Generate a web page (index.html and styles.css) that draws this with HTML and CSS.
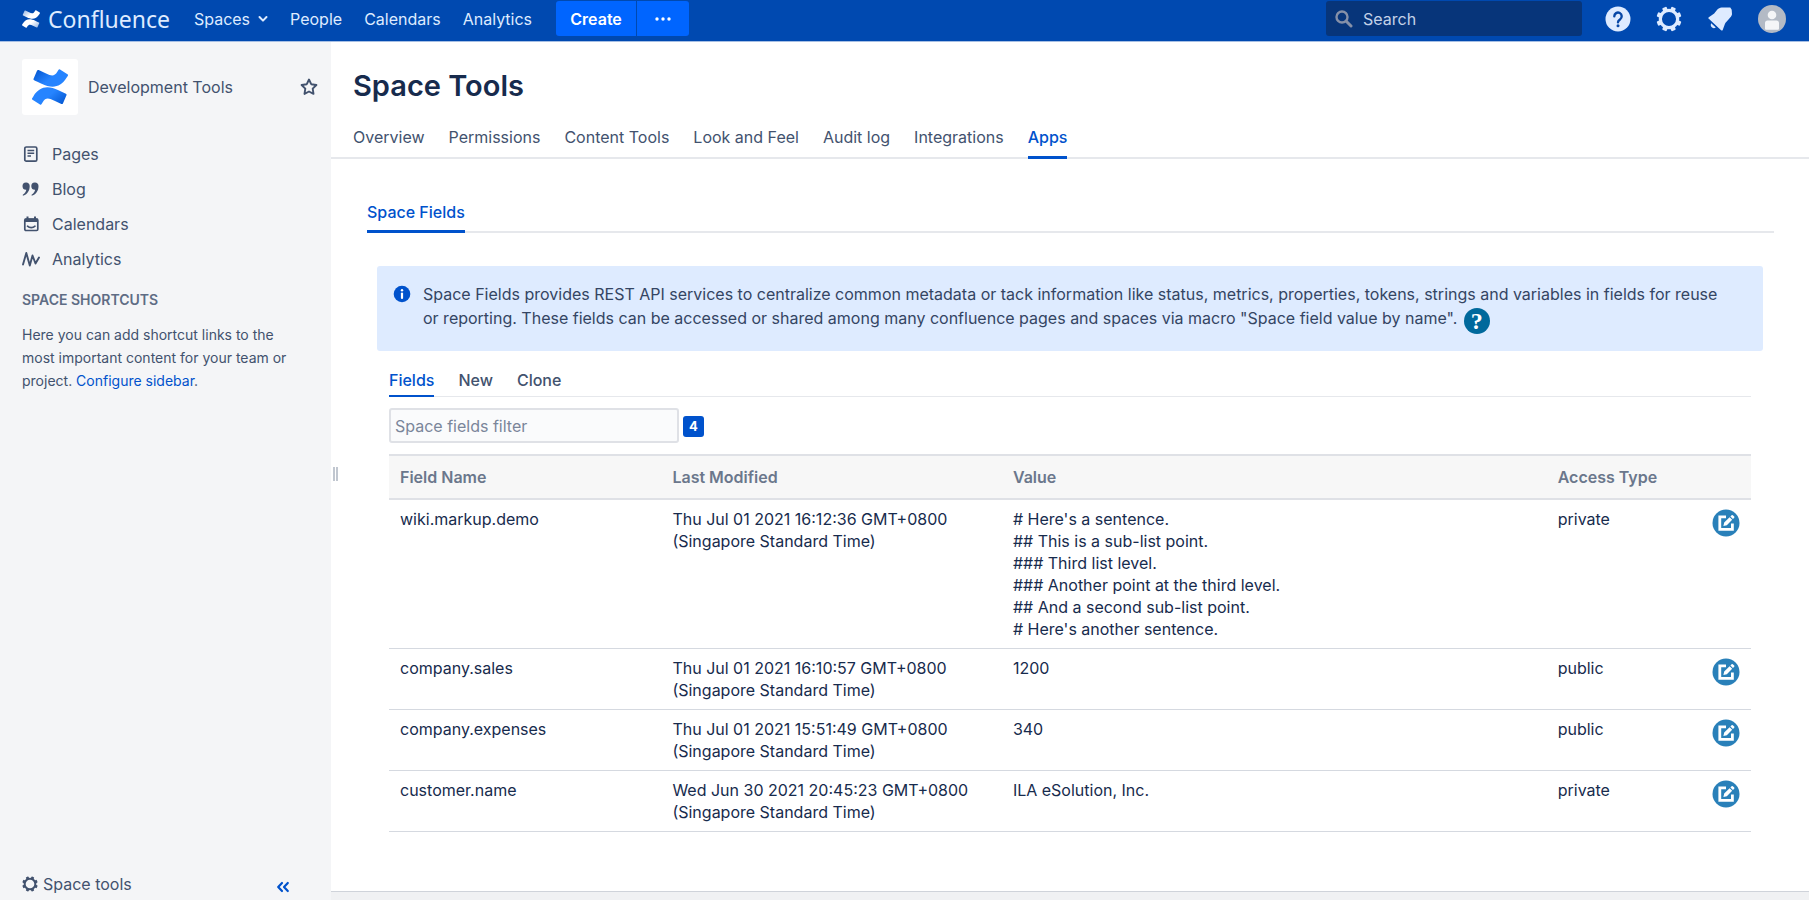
FILE: index.html
```html
<!DOCTYPE html>
<html lang="en">
<head>
  <meta charset="utf-8">
  <title>Space Tools - Development Tools - Confluence</title>
  <link rel="stylesheet" href="styles.css">
</head>

<body>

<!-- shared icon shapes -->
<svg class="sprite" width="0" height="0" aria-hidden="true">
  <defs>
    <linearGradient id="blue-top" x1="0" y1="0" x2="1" y2="0.6">
      <stop offset="0" stop-color="#0052cc"/>
      <stop offset="0.6" stop-color="#2684ff"/>
    </linearGradient>
    <linearGradient id="blue-bottom" x1="1" y1="1" x2="0" y2="0.4">
      <stop offset="0" stop-color="#0052cc"/>
      <stop offset="0.6" stop-color="#2684ff"/>
    </linearGradient>
    <linearGradient id="white-top" x1="0" y1="0" x2="1" y2="0.6">
      <stop offset="0" stop-color="#8fb0e0"/>
      <stop offset="0.6" stop-color="#ffffff"/>
    </linearGradient>
    <linearGradient id="white-bottom" x1="1" y1="1" x2="0" y2="0.4">
      <stop offset="0" stop-color="#8fb0e0"/>
      <stop offset="0.6" stop-color="#ffffff"/>
    </linearGradient>
    <path id="mark-bottom" d="M.87 18.257c-.248.382-.53.875-.763 1.245a.764.764 0 0 0 .255 1.04l4.965 3.054a.764.764 0 0 0 1.058-.26c.199-.332.454-.763.733-1.221 1.967-3.247 3.945-2.853 7.508-1.146l4.957 2.337a.764.764 0 0 0 1.028-.382l2.364-5.346a.764.764 0 0 0-.382-1 599.851 599.851 0 0 1-4.965-2.361C10.911 10.97 5.224 11.185.87 18.257z"/>
    <path id="mark-top" d="M23.131 5.743c.249-.405.531-.875.764-1.25a.764.764 0 0 0-.256-1.034L18.675.404a.764.764 0 0 0-1.058.26c-.195.335-.451.763-.734 1.225-1.966 3.246-3.945 2.85-7.508 1.146L4.437.694a.764.764 0 0 0-1.027.382L1.046 6.422a.764.764 0 0 0 .382 1c1.039.49 3.105 1.467 4.965 2.361 6.698 3.246 12.392 3.029 16.738-4.04z"/>
    <symbol id="gear" viewBox="0 0 24 24">
      <circle cx="12" cy="12" r="8" fill="none" stroke="currentColor" stroke-width="3"/>
      <g fill="currentColor">
        <rect id="tooth" x="9.8" y="0.4" width="4.4" height="4" rx="1" transform="rotate(22.5 12 12)"/>
        <use href="#tooth" transform="rotate(45 12 12)"/>
        <use href="#tooth" transform="rotate(90 12 12)"/>
        <use href="#tooth" transform="rotate(135 12 12)"/>
        <use href="#tooth" transform="rotate(180 12 12)"/>
        <use href="#tooth" transform="rotate(225 12 12)"/>
        <use href="#tooth" transform="rotate(270 12 12)"/>
        <use href="#tooth" transform="rotate(315 12 12)"/>
      </g>
    </symbol>
    <symbol id="edit" viewBox="0 0 28 28">
      <circle cx="14" cy="14" r="13.5" fill="#2980b9"/>
      <path d="M14 7.8H7.8v12.6h12.600v-5.800" fill="none" stroke="#fff" stroke-width="2.8"/>
      <path d="M11.400 17l.8-3.400 5.400-5.400 2.600 2.600-5.400 5.400zM18.400 7.400l1.200-1.200a.9.9 0 0 1 1.200 0l1.400 1.400a.9.9 0 0 1 0 1.200L21 10z" fill="#fff"/>
    </symbol>
  </defs>
</svg>

<header class="header">
  <a class="brand" href="#">
    <svg width="18" height="18" viewBox="0 0 24 24" aria-hidden="true">
      <use href="#mark-top" fill="url(#white-top)"/>
      <use href="#mark-bottom" fill="url(#white-bottom)"/>
    </svg>
    <span>Confluence</span>
  </a>
  <nav class="header-nav">
    <a href="#">Spaces
      <svg width="10" height="8" viewBox="0 0 10 8" aria-hidden="true"><path d="M1.5 2L5 5.600 8.500 2" fill="none" stroke="currentColor" stroke-width="2" stroke-linecap="round" stroke-linejoin="round"/></svg>
    </a>
    <a href="#">People</a>
    <a href="#">Calendars</a>
    <a href="#">Analytics</a>
  </nav>
  <div class="create">
    <button type="button">Create</button>
    <button type="button" class="more" aria-label="Create from template">
      <svg width="16" height="4" viewBox="0 0 16 4" aria-hidden="true"><g fill="#fff"><circle cx="2" cy="2" r="1.700"/><circle cx="8" cy="2" r="1.700"/><circle cx="14" cy="2" r="1.700"/></g></svg>
    </button>
  </div>
  <form class="search">
    <svg width="18" height="18" viewBox="0 0 18 18" aria-hidden="true"><circle cx="7" cy="7" r="5.500" fill="none" stroke="#8590a8" stroke-width="2.400"/><path d="M11.500 11.500l4.500 4.500" stroke="#8590a8" stroke-width="3" stroke-linecap="round"/></svg>
    <input type="search" placeholder="Search" aria-label="Search">
  </form>
  <div class="header-icons">
    <a href="#" aria-label="Help">
      <svg width="26" height="26" viewBox="0 0 26 26"><circle cx="13" cy="13" r="12.500" fill="#deebff"/><path d="M9.300 10.300a3.700 3.700 0 1 1 5.700 3.100c-1.300.8-2 1.400-2 2.800" fill="none" stroke="#0747a6" stroke-width="2.400" stroke-linecap="round"/><circle cx="13" cy="19.800" r="1.500" fill="#0747a6"/></svg>
    </a>
    <a href="#" aria-label="Administration">
      <svg width="26" height="26"><use href="#gear"/></svg>
    </a>
    <a href="#" aria-label="Notifications">
      <svg width="26" height="26" viewBox="0 0 26 26"><path d="M23.300 1.500L14.600 1.600C11 2 9.500 4.800 7.200 7.600L1.800 11.200c-.7.500-.6 1 0 1.500l12.300 11.500c.7.600 1.300.5 1.600-.2l2.300-6.200c1.800-3.200 6.400-6.200 7-9.500l-.3-4.500z" fill="#deebff"/><path d="M4.200 17.300l4.600 4.200c-1.600 1.200-3.400.8-4.300-.4-.9-1.200-.9-2.600-.3-3.800z" fill="#deebff"/></svg>
    </a>
    <a href="#" aria-label="Your profile">
      <svg width="28" height="28" viewBox="0 0 28 28"><circle cx="14" cy="14" r="14" fill="#b3bac5"/><circle cx="14" cy="10" r="4.300" fill="#f4f5f7"/><path d="M7 18c0-1.600 1-2.500 2.500-2.500h9c1.500 0 2.500.9 2.500 2.500v5.500c0 .8-.6 1.300-1.400 1.300H8.400c-.8 0-1.400-.5-1.400-1.300z" fill="#f4f5f7"/></svg>
    </a>
  </div>
</header>

<div class="page">

  <aside class="sidebar">
    <div class="space-header">
      <a class="space-logo" href="#" aria-label="Development Tools home">
        <svg width="36" height="36" viewBox="0 0 24 24" aria-hidden="true">
          <use href="#mark-top" fill="url(#blue-top)"/>
          <use href="#mark-bottom" fill="url(#blue-bottom)"/>
        </svg>
      </a>
      <a class="space-name" href="#">Development Tools</a>
      <button type="button" class="star" aria-label="Add to My Spaces">
        <svg width="18" height="18" viewBox="0 0 18 18" aria-hidden="true"><path d="M9 1.500l2.200 4.700 5.200.8-3.700 3.700.8 5.200L9 13.500l-4.500 2.400.8-5.200L1.600 7l5.200-.8z" fill="none" stroke="currentColor" stroke-width="1.900" stroke-linejoin="round"/></svg>
      </button>
    </div>

    <ul class="space-links">
      <li><a href="#">
        <svg width="18" height="18" viewBox="0 0 18 18" aria-hidden="true"><rect x="2.800" y="2" width="12" height="14.200" rx="1.500" fill="none" stroke="currentColor" stroke-width="1.700"/><path d="M5.500 5.500h6.700M5.500 8.300h6.700M5.500 11h3.500" stroke="currentColor" stroke-width="1.500"/></svg>
        Pages</a></li>
      <li><a href="#">
        <svg width="18" height="18" viewBox="0 0 18 18" aria-hidden="true"><path id="quote" d="M4 2.500a3.500 3.500 0 0 1 3.700 3.800c0 4.400-2.400 8-6.200 9.300-.8.200-1.100-.8-.4-1.200 1.900-1.100 3-2.700 3.200-4.600A3.600 3.600 0 0 1 4 2.500z" fill="currentColor"/><use href="#quote" x="8.800"/></svg>
        Blog</a></li>
      <li><a href="#">
        <svg width="18" height="18" viewBox="0 0 18 18" aria-hidden="true"><rect x="2.800" y="4" width="13" height="11.500" rx="1.200" fill="none" stroke="currentColor" stroke-width="1.700"/><path d="M2.800 3.500h13v3.500h-13zM4.500 1.500h2v3h-2zM12 1.500h2v3h-2z" fill="currentColor"/><path d="M5.500 11.200c2 1.900 5.500 1.900 7.500 0" fill="none" stroke="currentColor" stroke-width="1.600" stroke-linecap="round"/></svg>
        Calendars</a></li>
      <li><a href="#">
        <svg width="18" height="18" viewBox="0 0 18 18" aria-hidden="true"><path d="M1 14.500L4.300 3 7.800 15.500 10.500 5.500l3 8L17 7.500" fill="none" stroke="currentColor" stroke-width="1.900" stroke-linecap="round" stroke-linejoin="round"/></svg>
        Analytics</a></li>
    </ul>

    <h2>Space shortcuts</h2>
    <p class="tip">Here you can add shortcut links to the most important content for your team or project. <a href="#">Configure sidebar</a>.</p>

    <div class="sidebar-footer">
      <a href="#"><svg width="16" height="16" aria-hidden="true"><use href="#gear"/></svg>Space tools</a>
      <button type="button" class="collapse" aria-label="Collapse sidebar">
        <svg width="14" height="12" viewBox="0 0 14 12" aria-hidden="true"><path d="M6 2L2.200 6 6 10M11.800 2L8 6l3.800 4" fill="none" stroke="currentColor" stroke-width="2.200" stroke-linecap="round" stroke-linejoin="round"/></svg>
      </button>
    </div>
    <div class="grip"></div>
  </aside>

  <main class="main">
    <h1>Space Tools</h1>

    <nav class="tabs">
      <a href="#">Overview</a>
      <a href="#">Permissions</a>
      <a href="#">Content Tools</a>
      <a href="#">Look and Feel</a>
      <a href="#">Audit log</a>
      <a href="#">Integrations</a>
      <a href="#" class="active">Apps</a>
    </nav>

    <div class="app">
      <nav class="tabs sub-tabs">
        <a href="#" class="active">Space Fields</a>
      </nav>

      <div class="info">
        <svg width="18" height="18" viewBox="0 0 18 18" aria-hidden="true"><circle cx="9" cy="9" r="8.300" fill="#0052cc"/><circle cx="9" cy="5.300" r="1.200" fill="#fff"/><path d="M9 8.500v4.500" stroke="#fff" stroke-width="2.200" stroke-linecap="round"/></svg>
        <p>Space Fields provides REST API services to centralize common metadata or tack information like status, metrics, properties, tokens, strings and variables in fields for reuse or reporting. These fields can be accessed or shared among many confluence pages and spaces via macro "Space field value by name". <a class="help" href="#" aria-label="Documentation">?</a></p>
      </div>

      <div class="fields">
        <nav class="tabs field-tabs">
          <a href="#" class="active">Fields</a>
          <a href="#">New</a>
          <a href="#">Clone</a>
        </nav>

        <form class="filter">
          <input type="text" placeholder="Space fields filter" aria-label="Space fields filter">
          <span class="badge">4</span>
        </form>

        <table>
          <thead>
            <tr>
              <th class="col-name">Field Name</th>
              <th class="col-modified">Last Modified</th>
              <th class="col-value">Value</th>
              <th class="col-access">Access Type</th>
              <th></th>
            </tr>
          </thead>
          <tbody>
            <tr>
              <td>wiki.markup.demo</td>
              <td>Thu Jul 01 2021 16:12:36 GMT+0800<br>(Singapore Standard Time)</td>
              <td># Here's a sentence.<br>
                ## This is a sub-list point.<br>
                ### Third list level.<br>
                ### Another point at the third level.<br>
                ## And a second sub-list point.<br>
                # Here's another sentence.</td>
              <td>private</td>
              <td class="action"><button type="button" aria-label="Edit wiki.markup.demo"><svg width="28" height="28"><use href="#edit"/></svg></button></td>
            </tr>
            <tr>
              <td>company.sales</td>
              <td>Thu Jul 01 2021 16:10:57 GMT+0800<br>(Singapore Standard Time)</td>
              <td>1200</td>
              <td>public</td>
              <td class="action"><button type="button" aria-label="Edit company.sales"><svg width="28" height="28"><use href="#edit"/></svg></button></td>
            </tr>
            <tr>
              <td>company.expenses</td>
              <td>Thu Jul 01 2021 15:51:49 GMT+0800<br>(Singapore Standard Time)</td>
              <td>340</td>
              <td>public</td>
              <td class="action"><button type="button" aria-label="Edit company.expenses"><svg width="28" height="28"><use href="#edit"/></svg></button></td>
            </tr>
            <tr>
              <td>customer.name</td>
              <td>Wed Jun 30 2021 20:45:23 GMT+0800<br>(Singapore Standard Time)</td>
              <td>ILA eSolution, Inc.</td>
              <td>private</td>
              <td class="action"><button type="button" aria-label="Edit customer.name"><svg width="28" height="28"><use href="#edit"/></svg></button></td>
            </tr>
          </tbody>
        </table>
      </div>
    </div>

    <div class="page-end"></div>
  </main>

</div>

</body>
</html>
```
FILE: styles.css
```css
* {
  box-sizing: border-box;
}
body {
  margin: 0;
  min-height: 100vh;
  display: flex;
  flex-direction: column;
  font-family: Inter, "Liberation Sans", sans-serif;
  font-size: 16px;
  line-height: 22px;
  color: #172b4d;
  background-color: #ffffff;
}
a {
  color: inherit;
  text-decoration: none;
}
svg {
  display: block;
  flex: none;
}
button {
  padding: 0;
  border: 0;
  background: none;
  font: inherit;
  color: inherit;
  cursor: pointer;
}
.sprite {
  position: absolute;
}

/* header */
.header {
  display: flex;
  align-items: center;
  height: 42px;
  padding: 0 23px 4px 22px;
  background-color: #0049b0;
  border-bottom: 1px solid #a6bfe4;
  color: #deebff;
}
.brand {
  display: flex;
  align-items: center;
  gap: 8px;
  margin-right: 24px;
  font-family: "Noto Sans", "Open Sans", sans-serif;
  font-size: 23px;
}
.header-nav {
  display: flex;
  gap: 22px;
}
.header-nav a {
  display: flex;
  align-items: center;
  gap: 8px;
}
.create {
  display: flex;
  gap: 1px;
  margin-left: 24px;
}
.create button {
  width: 80px;
  height: 35px;
  background-color: #0065ff;
  border-radius: 3px 0 0 3px;
  color: #ffffff;
  font-weight: 600;
}
.create .more {
  display: flex;
  align-items: center;
  justify-content: center;
  width: 52px;
  border-radius: 0 3px 3px 0;
}
.search {
  display: flex;
  align-items: center;
  gap: 10px;
  width: 256px;
  height: 35px;
  margin-left: auto;
  padding: 0 9px;
  background-color: #07357a;
  border-radius: 3px;
}
.search input {
  flex: 1;
  min-width: 0;
  padding: 0;
  border: 0;
  background: none;
  font: inherit;
  color: #deebff;
}
.search input::placeholder {
  color: #c3d1e8;
}
.header-icons {
  display: flex;
  align-items: center;
  gap: 25px;
  margin-left: 23px;
}

/* sidebar */
.page {
  flex: 1;
  display: flex;
}
.sidebar {
  position: relative;
  display: flex;
  flex-direction: column;
  width: 331px;
  flex: none;
  padding: 17px 13px 5px 22px;
  background-color: #f4f5f7;
  color: #42526e;
}
.space-header {
  display: flex;
  align-items: center;
  gap: 10px;
}
.space-logo {
  padding: 10px;
  background-color: #ffffff;
  border-radius: 3px;
}
.space-name {
  flex: 1;
}
.space-links {
  margin: 21px 0 0;
  padding: 0;
  list-style: none;
}
.space-links a {
  display: flex;
  align-items: center;
  gap: 12px;
  height: 35px;
}
.sidebar h2 {
  margin: 13px 0 0;
  font-size: 14px;
  font-weight: 600;
  text-transform: uppercase;
  color: #5e6c84;
}
.tip {
  margin: 12px 0 0;
  padding-right: 14px;
  font-size: 14px;
  line-height: 23px;
}
.tip a {
  color: #0052cc;
}
.sidebar-footer {
  display: flex;
  align-items: flex-end;
  justify-content: space-between;
  margin-top: auto;
  padding-right: 28px;
}
.sidebar-footer a {
  display: flex;
  align-items: center;
  gap: 5px;
}
.collapse {
  padding-bottom: 2px;
  color: #0052cc;
}
/* drag handle just outside the sidebar edge */
.grip {
  position: absolute;
  left: 333px;
  top: 425px;
  width: 5px;
  height: 14px;
  border: solid #c1c7d0;
  border-width: 0 2px;
}

/* main */
.main {
  flex: 1;
  min-width: 0;
  display: flex;
  flex-direction: column;
}
h1 {
  margin: 24px 22px 0;
  font-size: 29px;
  line-height: 40px;
  font-weight: 600;
}
.tabs {
  display: flex;
  gap: 24px;
  border-bottom: 2px solid #e6e8ec;
  color: #42526e;
}
.tabs a {
  margin-bottom: -2px;
  padding-bottom: 8px;
  border-bottom: 3px solid transparent;
}
.tabs .active {
  border-color: #0052cc;
  color: #0052cc;
  font-weight: 500;
}
.main > .tabs {
  margin-top: 20px;
  padding-left: 22px;
}
.app {
  padding: 42px 35px 0 36px;
}
.sub-tabs a {
  padding-bottom: 7px;
}
.info {
  display: flex;
  gap: 12px;
  margin: 33px 11px 0 10px;
  padding: 16px 32px 21px 16px;
  background-color: #deebff;
  border-radius: 3px;
  color: #344563;
}
.info svg {
  margin-top: 3px;
}
.info p {
  margin: 0;
  line-height: 24px;
}
.help {
  display: inline-block;
  width: 26px;
  height: 26px;
  margin: -1px 0 -4px 2px;
  background-color: #00699c;
  border-radius: 50%;
  color: #ffffff;
  font-family: "Liberation Serif", serif;
  font-size: 24px;
  font-weight: bold;
  line-height: 26px;
  text-align: center;
  vertical-align: middle;
}
.fields {
  margin: 18px 23px 0 22px;
}
.field-tabs {
  border-bottom-width: 1px;
  font-weight: 500;
}
.field-tabs a {
  margin-bottom: -1px;
  padding-bottom: 4px;
  border-bottom-width: 2px;
}
.filter {
  display: flex;
  align-items: center;
  gap: 4px;
  margin: 11px 0;
}
.filter input {
  width: 290px;
  height: 35px;
  padding: 0 4px;
  background-color: #fafbfc;
  border: 2px solid #dfe1e6;
  border-radius: 3px;
  font: inherit;
}
.filter input::placeholder {
  color: #7a869a;
}
.badge {
  width: 21px;
  height: 21px;
  margin-top: 2px;
  background-color: #0052cc;
  border-radius: 3px;
  color: #ffffff;
  font-size: 13px;
  font-weight: 700;
  line-height: 21px;
  text-align: center;
}

table {
  width: 100%;
  border-collapse: collapse;
  table-layout: fixed;
}
.col-name {
  width: 20%;
}
.col-modified {
  width: 25%;
}
.col-value {
  width: 40%;
}
.col-access {
  width: 11%;
}
th {
  padding: 10px 11px;
  background-color: #f7f7f7;
  border-top: 2px solid #dfe1e6;
  border-bottom: 2px solid #dfe1e6;
  color: #6b778c;
  font-weight: 600;
  text-align: left;
}
td {
  padding: 8px 11px;
  border-bottom: 1px solid #d5d9e0;
  vertical-align: top;
}
.action {
  padding-top: 9px;
}
.action button {
  display: block;
  margin-left: auto;
}
.page-end {
  height: 9px;
  margin-top: auto;
  background-color: #f0f1f3;
  border-top: 1px solid #cfd3da;
}
```
